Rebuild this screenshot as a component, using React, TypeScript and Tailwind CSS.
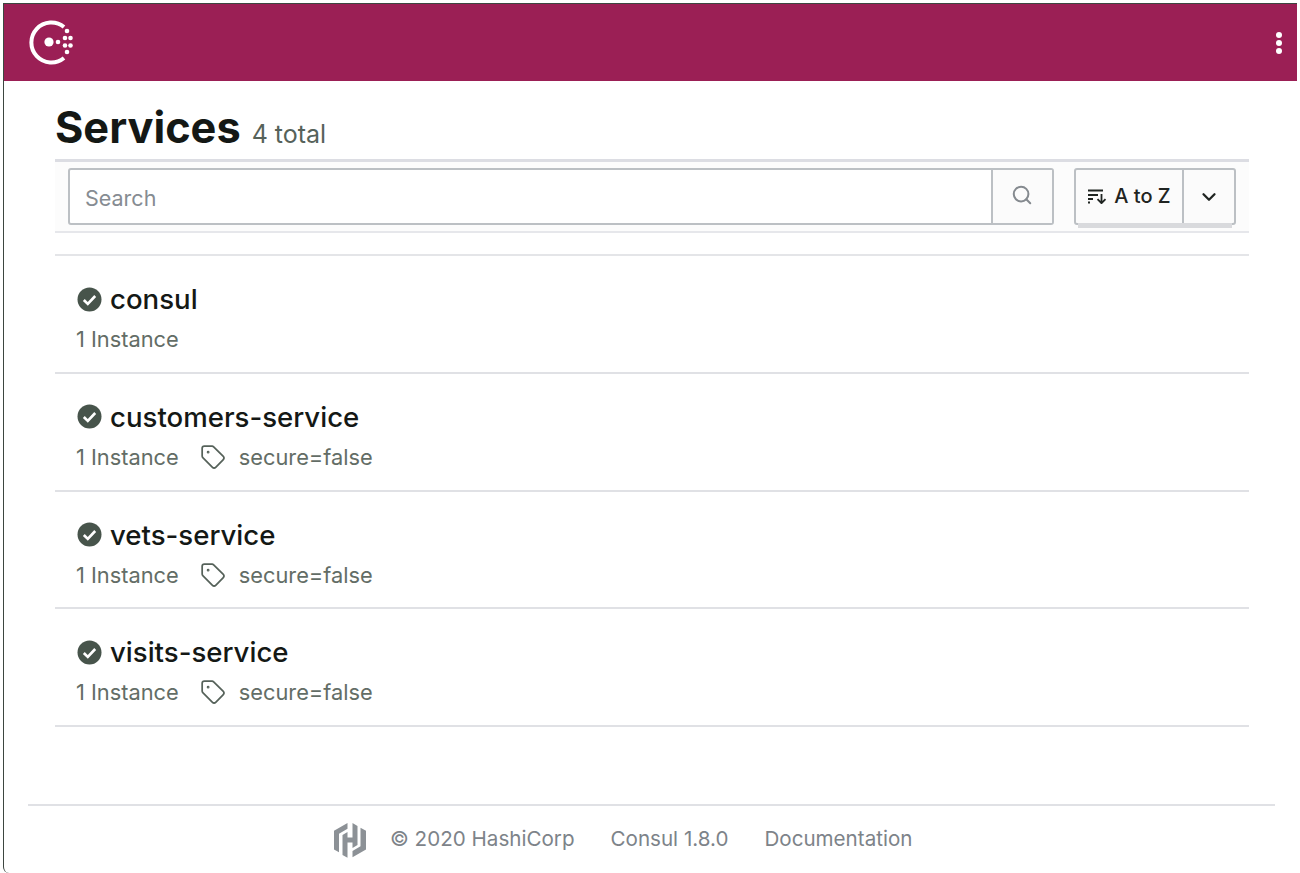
import React from 'react';
import { Search, ChevronDown, Tag } from 'lucide-react';

const services = [
  { name: 'consul', tag: false },
  { name: 'customers-service', tag: true },
  { name: 'vets-service', tag: true },
  { name: 'visits-service', tag: true },
];

const ConsulLogo = () => (
  <svg width="48" height="46" viewBox="0 0 48 46" fill="none">
    <path d="M37 7.5A20 20 0 1 0 37 38.5" stroke="#fff" strokeWidth="4" strokeLinecap="butt" transform="translate(-1 -0.5)" />
    <circle cx="21" cy="22" r="4.6" fill="#fff" />
    <circle cx="30" cy="22" r="2.3" fill="#fff" />
    <circle cx="39" cy="11" r="2.3" fill="#fff" />
    <circle cx="37" cy="18" r="2.3" fill="#fff" />
    <circle cx="42.5" cy="18" r="2.3" fill="#fff" />
    <circle cx="37" cy="25.5" r="2.3" fill="#fff" />
    <circle cx="42.5" cy="25.5" r="2.3" fill="#fff" />
    <circle cx="39" cy="32" r="2.3" fill="#fff" />
  </svg>
);

const HashiLogo = () => (
  <svg width="34" height="36" viewBox="0 0 34 36" fill="#8c9196">
    <path d="M14.5 1 1 8.8v18.6l5 2.9V11.7l8.5-4.9z" />
    <path d="M19.5 1v14.5h-5V10l-5 2.9v20l5 2.9V20.5h5V26l5-2.9V3.9z" />
    <path d="M27.5 5.7v18.6L19.5 29v6.2L33 27.4V8.8z" />
  </svg>
);

const SortIcon = () => (
  <svg width="20" height="16" viewBox="0 0 20 16" fill="none" stroke="#1f2421" strokeWidth="1.8">
    <path d="M1 2.5h15M1 7h10M1 11h5M1 14.5h2" />
    <path d="M14.5 6v9M10.5 11.2l4 4 4-4" />
  </svg>
);

const CheckBadge = () => (
  <svg width="25" height="25" viewBox="0 0 25 25">
    <circle cx="12.5" cy="12.5" r="12" fill="#47544b" />
    <path d="M6.8 13l4 4 7.4-8" fill="none" stroke="#fff" strokeWidth="2.6" />
  </svg>
);

const App: React.FC = () => {
  return (
    <div className="h-[873px] w-[1300px] overflow-hidden bg-white pt-[3px] pr-[3px] pl-[3px] font-['Inter',sans-serif]">
      <div className="flex h-full flex-col rounded-bl-md border-t border-l border-[#3d4640]">
        <header className="flex h-[77px] shrink-0 items-center justify-between bg-[#9b1f55] pr-[15px] pl-[24px]">
          <ConsulLogo />
          <div className="flex flex-col gap-[2px]">
            <span className="h-[6px] w-[6px] rounded-full bg-white" />
            <span className="h-[6px] w-[6px] rounded-full bg-white" />
            <span className="h-[6px] w-[6px] rounded-full bg-white" />
          </div>
        </header>

        <main className="flex-1 pr-[48px] pl-[51px]">
          <div className="flex h-[78px] items-end pb-[5px]">
            <h1 className="text-[43.3px] leading-[54px] font-bold text-[#141815]">Services</h1>
            <span className="mb-[3px] ml-[11px] text-[25px] leading-[34px] text-[#56625a]">4 total</span>
          </div>

          <div className="flex h-[74px] items-start border-t-[3px] border-b-2 border-t-[#dcdde3] border-b-[#e6e7eb] bg-[#fcfcfc] pt-[6px] pr-[13px] pl-[13px]">
            <div className="flex h-[57px] flex-1 rounded-[3px] border-2 border-[#bcc0c4] bg-white">
              <div className="flex flex-1 items-center px-[15px] pt-[3px] text-[21.5px] text-[#868c92]">Search</div>
              <div className="flex w-[61px] items-center justify-center border-l-2 border-[#bcc0c4] bg-[#fbfbfb] pr-[2px] pb-[3px]">
                <Search size={22} strokeWidth={2.2} className="text-[#858a8f]" />
              </div>
            </div>
            <div className="relative ml-[20px] flex h-[57px] w-[162px] rounded-[3px] border-2 border-[#bcc0c4] bg-[#fbfbfb]">
              <div className="flex flex-1 items-center justify-center gap-[7px] pb-[2px] text-[20px] font-medium text-[#1f2421]">
                <SortIcon />
                <span>A to Z</span>
              </div>
              <div className="flex w-[52px] items-center justify-center border-l-2 border-[#bcc0c4]">
                <ChevronDown size={22} strokeWidth={2.5} className="text-[#1f2421]" />
              </div>
              <div className="absolute top-full right-[2px] left-[2px] h-[5px] bg-[#d9dadd]" />
            </div>
          </div>

          <div className="mt-[21px] border-t-2 border-[#e4e5e8]">
            {services.map((service) => (
              <div key={service.name} className="h-[117.75px] border-b-2 border-[#e0e1e5] pt-[26px] pl-[21px]">
                <div className="flex items-center gap-[8px] pl-[1px]">
                  <CheckBadge />
                  <span className="text-[27.6px] leading-[34px] font-medium text-[#141815]">{service.name}</span>
                </div>
                <div className="mt-[8px] flex items-center text-[21.8px] leading-[30px] text-[#636d66]">
                  <span>1 Instance</span>
                  {service.tag && (
                    <>
                      <Tag size={26} strokeWidth={1.6} className="ml-[21px] text-[#56625a]" />
                      <span className="ml-[13px]">secure=false</span>
                    </>
                  )}
                </div>
              </div>
            ))}
          </div>
        </main>

        <footer className="mr-[22px] mb-[2px] ml-[24px] flex h-[67px] shrink-0 items-center gap-[36px] border-t-2 border-[#e0e1e5] pt-[2px] pl-[305px] text-[20.6px] text-[#7d8389]">
          <div className="flex items-center gap-[23px]">
            <HashiLogo />
            <span>© 2020 HashiCorp</span>
          </div>
          <span>Consul 1.8.0</span>
          <span>Documentation</span>
        </footer>
      </div>
    </div>
  );
};

export default App;
